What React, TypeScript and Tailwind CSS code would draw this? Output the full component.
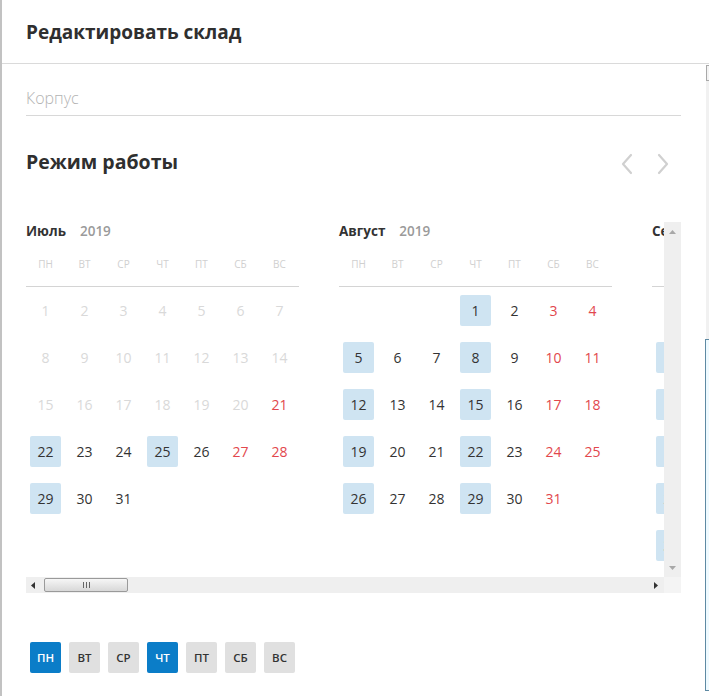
import React from "react";

type Month = { name: string; start: number; days: number; disabledUntil: number };

const months: Month[] = [
  { name: "Июль", start: 0, days: 31, disabledUntil: 20 },
  { name: "Август", start: 3, days: 31, disabledUntil: 0 },
  { name: "Сентябрь", start: 6, days: 30, disabledUntil: 0 },
];

const weekdays = ["пн", "вт", "ср", "чт", "пт", "сб", "вс"];

function MonthView({ m }: { m: Month }) {
  const cells: (number | null)[] = [];
  for (let i = 0; i < m.start; i++) cells.push(null);
  for (let d = 1; d <= m.days; d++) cells.push(d);
  return (
    <div className="w-[273px] shrink-0">
      <div className="h-[18px] flex items-center gap-[14px] text-[13.5px] leading-[18px]">
        <span className="font-bold text-[#333]">{m.name}</span>
        <span className="font-semibold text-[#9a9a9a]">2019</span>
      </div>
      <div className="mt-[17px] pb-[15px] border-b border-[#d4d4d4] grid grid-cols-7 text-[10px] leading-[14px] uppercase text-[#d0d0d0]">
        {weekdays.map((w) => (
          <div key={w} className="text-center">
            {w}
          </div>
        ))}
      </div>
      <div className="pt-[8px] grid grid-cols-7 gap-y-[16px]">
        {cells.map((d, i) => {
          if (d === null) return <div key={i} className="h-[31px]" />;
          const col = i % 7;
          const disabled = d <= m.disabledUntil;
          const weekend = col >= 5;
          const hl = !disabled && (col === 0 || col === 3);
          let cls = "text-[#333]";
          if (disabled) cls = "text-[#d9d9d9]";
          else if (weekend) cls = "text-[#e2474d]";
          return (
            <div key={i} className="flex justify-center">
              <div
                className={`w-[31px] h-[31px] rounded-[2px] flex items-center justify-center text-[14px] ${cls} ${
                  hl ? "bg-[#cfe4f2]" : ""
                }`}
              >
                {d}
              </div>
            </div>
          );
        })}
      </div>
    </div>
  );
}

function Chevron({ dir }: { dir: "l" | "r" }) {
  return (
    <svg width="14" height="22" viewBox="0 0 14 22" fill="none">
      <path
        d={dir === "l" ? "M11 2 L3 11 L11 20" : "M3 2 L11 11 L3 20"}
        stroke="#d0d0d0"
        strokeWidth="2.2"
        strokeLinecap="round"
        strokeLinejoin="round"
      />
    </svg>
  );
}

export default function App() {
  return (
    <div
      className="relative w-[709px] h-[696px] bg-white overflow-hidden border-l-2 border-[#c2c2c2]"
      style={{ fontFamily: '"Open Sans", "Noto Sans", sans-serif' }}
    >
      <div className="h-[64px] border-b border-[#dadada] pl-[24px] flex items-center">
        <h1 className="text-[19px] font-bold text-[#2f2f2f] mt-[1px]">Редактировать склад</h1>
      </div>

      <div className="pl-[24px] pr-[28px]">
        <div className="mt-[17px] h-[35px] border-b border-[#d8d8d8] flex items-center text-[16px] text-[#b3b3b3] font-light pb-[1px]">
          Корпус
        </div>

        <div className="mt-[31px] h-[30px] flex items-center justify-between">
          <h2 className="text-[19.5px] font-bold text-[#2f2f2f]">Режим работы</h2>
          <div className="flex items-center gap-[22px] mr-[11px] mt-[3px]">
            <Chevron dir="l" />
            <Chevron dir="r" />
          </div>
        </div>

        <div className="mt-[45px] flex h-[371px]">
          <div className="w-[638px] flex flex-col">
            <div className="h-[355px] overflow-hidden">
              <div className="flex gap-[40px]">
                {months.map((m) => (
                  <MonthView key={m.name} m={m} />
                ))}
              </div>
            </div>
            <div className="h-[16px] bg-[#efefef] flex items-center relative">
              <svg className="absolute left-[5px] top-[5px]" width="5" height="7" viewBox="0 0 5 7">
                <path d="M4 0 L0 3.5 L4 7 Z" fill="#333" />
              </svg>
              <div className="absolute left-[18px] top-[1px] w-[84px] h-[14px] rounded-[2px] border border-[#9a9a9a] bg-gradient-to-b from-[#f6f6f6] to-[#d8d8d8] flex items-center justify-center">
                <div className="flex gap-[2px]">
                  <div className="w-[1px] h-[6px] bg-[#666]" />
                  <div className="w-[1px] h-[6px] bg-[#666]" />
                  <div className="w-[1px] h-[6px] bg-[#666]" />
                </div>
              </div>
              <svg className="absolute right-[6px] top-[5px]" width="5" height="7" viewBox="0 0 5 7">
                <path d="M1 0 L5 3.5 L1 7 Z" fill="#333" />
              </svg>
            </div>
          </div>
          <div className="w-[17px] bg-[#efefef] relative">
            <svg className="absolute left-[5px] top-[8px]" width="7" height="4" viewBox="0 0 7 4">
              <path d="M0 4 L3.5 0 L7 4 Z" fill="#a8a8a8" />
            </svg>
            <svg className="absolute left-[5px] top-[344px]" width="7" height="4" viewBox="0 0 7 4">
              <path d="M0 0 L3.5 4 L7 0 Z" fill="#a8a8a8" />
            </svg>
            <div className="absolute left-0 top-[355px] w-[17px] h-[16px] bg-[#f4f4f4]" />
          </div>
        </div>

        <div className="mt-[49px] flex gap-[8px] pl-[4px]">
          {weekdays.map((w, i) => {
            const on = i === 0 || i === 3;
            return (
              <div
                key={w}
                className={`w-[31px] h-[31px] rounded-[2px] flex items-center justify-center text-[11.5px] font-semibold uppercase ${
                  on ? "bg-[#0b7dc8] text-white" : "bg-[#e0e0e0] text-[#333]"
                }`}
              >
                {w}
              </div>
            );
          })}
        </div>
      </div>

      <div className="absolute right-0 top-[65px] w-[3px] h-[16px] border border-r-0 border-[#a9a9a9] bg-[#f3f3f3]" />
      <div className="absolute right-0 top-[81px] w-[3px] h-[258px] bg-[#f1f1f1]" />
      <div className="absolute right-0 top-[339px] w-[4px] h-[352px] border border-r-0 border-[#5f8aa3] bg-[#eefaff]" />
    </div>
  );
}
